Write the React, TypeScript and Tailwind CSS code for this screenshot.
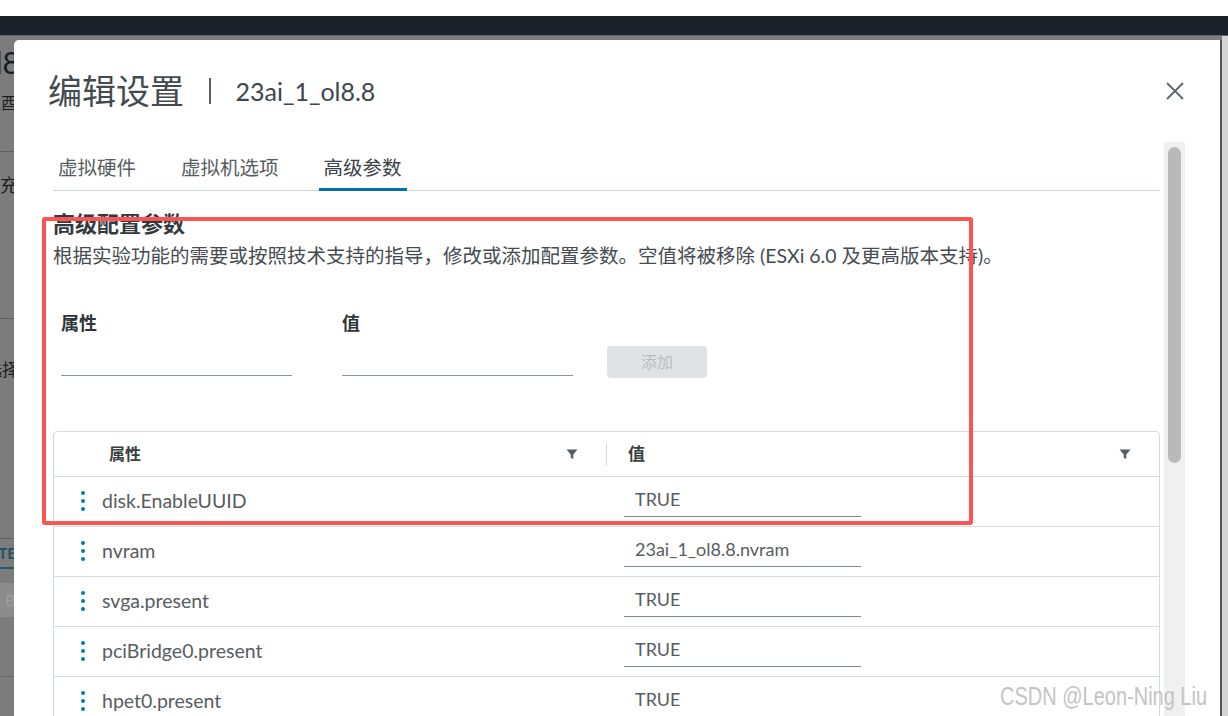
import React from "react";

const rows: [string, string][] = [
  ["disk.EnableUUID", "TRUE"],
  ["nvram", "23ai_1_ol8.8.nvram"],
  ["svga.present", "TRUE"],
  ["pciBridge0.present", "TRUE"],
  ["hpet0.present", "TRUE"],
];

function FilterIcon() {
  return (
    <svg width="12" height="12" viewBox="0 0 12 12" className="shrink-0">
      <path d="M0.5 1.5h11L7.3 6.4V11L4.7 9.8V6.4z" fill="#555d62" />
    </svg>
  );
}

function Kebab() {
  return (
    <div className="flex flex-col items-center gap-[4px] w-[6px]">
      <span className="w-[4px] h-[4px] rounded-full bg-[#0079b8]" />
      <span className="w-[4px] h-[4px] rounded-full bg-[#0079b8]" />
      <span className="w-[4px] h-[4px] rounded-full bg-[#0079b8]" />
    </div>
  );
}

function CloseIcon() {
  return (
    <svg width="20" height="20" viewBox="0 0 20 20">
      <path d="M2 2L18 18M18 2L2 18" stroke="#5c666d" strokeWidth="1.8" fill="none" />
    </svg>
  );
}

export default function App() {
  return (
    <div className="relative w-[1228px] h-[716px] overflow-hidden bg-[#7c7c7c] font-['Lato','Noto_Sans_CJK_SC',sans-serif]">
      {/* browser chrome + app top bar */}
      <div className="h-[16px] bg-white" />
      <div className="h-[20px] bg-[#1b2128] border-b border-[#5d6266]" />

      {/* dimmed page behind the dialog */}
      <div className="flex h-[680px]">
        <div className="w-[14px] overflow-hidden flex flex-col text-[#1d1d1d]">
          <div className="h-[52px] flex items-center justify-end">
            <span className="text-[30px] leading-none whitespace-nowrap mr-[-6px]">ol8</span>
          </div>
          <div className="h-[30px] flex items-center justify-end">
            <span className="text-[16px] leading-none whitespace-nowrap mr-[-3px]">配置酉</span>
          </div>
          <div className="h-[34px] border-b border-[#5e5e5e]" />
          <div className="h-[65px] flex items-center justify-end">
            <span className="text-[18px] leading-none whitespace-nowrap mr-[-4px]">补充</span>
          </div>
          <div className="h-[102px] border-b border-[#5e5e5e]" />
          <div className="h-[100px] flex items-center justify-end">
            <span className="text-[17px] leading-none whitespace-nowrap mr-[-5px]">选择</span>
          </div>
          <div className="h-[120px] border-b border-[#5e5e5e]" />
          <div className="h-[30px] flex items-center justify-end border-b-2 border-[#1e5a7a] text-[#1e5068] font-bold">
            <span className="text-[15px] leading-none whitespace-nowrap mr-[-2px]">ATE</span>
          </div>
          <div className="h-[14px]" />
          <div className="h-[34px] bg-[#8c8c8c] flex items-center justify-end text-[#9e9e9e]">
            <span className="text-[15px] leading-none whitespace-nowrap mr-[-1px]">B</span>
          </div>
          <div className="h-[60px] border-b border-[#6a6a6a]" />
        </div>
        <div className="flex-1" />
        <div className="w-[6px] bg-[#d4d4d4]" />
      </div>

      {/* dialog */}
      <div className="absolute left-[14px] top-[40px] w-[1208px] h-[690px] bg-white rounded-tl-[5px] border-r-2 border-[#555] flex flex-col">
        <div className="flex items-center h-[42px] mt-[30px] pl-[34px] pr-[35px]">
          <span className="text-[34px] leading-none text-[#444b4f] whitespace-nowrap">编辑设置</span>
          <span className="w-[1.5px] h-[26px] bg-[#566066] ml-[25px] mr-[25px]" />
          <span className="text-[25px] leading-none text-[#3d474d] whitespace-nowrap">23ai_1_ol8.8</span>
          <button className="ml-auto">
            <CloseIcon />
          </button>
        </div>

        <div className="flex flex-1 min-h-0 mt-[30px]">
          <div className="ml-[39px] w-[1107px] pt-[3px] flex flex-col">
            {/* tabs */}
            <div className="flex gap-[35px] h-[46px] border-b border-[#ccd5da]">
              <div className="px-[5px] flex items-center text-[19.5px] text-[#565c60]">虚拟硬件</div>
              <div className="px-[5px] flex items-center text-[19.5px] text-[#565c60]">虚拟机选项</div>
              <div className="px-[5px] flex items-center pt-[3px] text-[19.5px] text-[#3a4145] border-b-[3px] border-[#0072a3] -mb-px">
                高级参数
              </div>
            </div>

            <div className="mt-[20px] text-[22px] font-bold leading-[26px] text-[#333a3e]">高级配置参数</div>
            <div className="mt-[6px] text-[19.5px] leading-[26px] text-[#454b4f] whitespace-nowrap">
              根据实验功能的需要或按照技术支持的指导，修改或添加配置参数。空值将被移除 (ESXi 6.0 及更高版本支持)。
            </div>

            {/* add form */}
            <div className="flex items-end mt-[42px] pl-[8px]">
              <div className="w-[231px] flex flex-col">
                <span className="text-[18px] font-bold leading-[24px] text-[#2f3538]">属性</span>
                <div className="mt-[11px] h-[30px] border-b-[1.5px] border-[#8a969c]" />
              </div>
              <div className="ml-[50px] w-[231px] flex flex-col">
                <span className="text-[18px] font-bold leading-[24px] text-[#2f3538]">值</span>
                <div className="mt-[11px] h-[30px] border-b-[1.5px] border-[#8a969c]" />
              </div>
              <button className="ml-[34px] mb-[-2px] w-[100px] h-[32px] rounded-[4px] bg-[#e0e3e5] text-[16px] text-[#b7bdc1]">
                添加
              </button>
            </div>

            {/* parameters table */}
            <div className="mt-[55px] border border-[#d5dce0] rounded-[4px]">
              <div className="flex items-center h-[45px] border-b border-[#d5dce0]">
                <div className="w-[552px] flex items-center pl-[55px] pr-[28px]">
                  <span className="text-[16px] font-semibold text-[#3a3f42]">属性</span>
                  <span className="ml-auto">
                    <FilterIcon />
                  </span>
                </div>
                <div className="w-px h-[23px] bg-[#d5dce0]" />
                <div className="flex-1 flex items-center pl-[21px] pr-[28px]">
                  <span className="text-[17px] font-semibold text-[#3a3f42]">值</span>
                  <span className="ml-auto">
                    <FilterIcon />
                  </span>
                </div>
              </div>
              {rows.map(([name, value]) => (
                <div key={name} className="flex items-start h-[50px] border-b border-[#d5dce0]">
                  <div className="w-[570px] h-full flex items-center pl-[26px] pb-[2px]">
                    <Kebab />
                    <span className="ml-[16px] text-[19.5px] text-[#575d61]">{name}</span>
                  </div>
                  <div className="w-[237px] h-[35px] mt-[5px] border-b-[1.5px] border-[#7d898f] flex items-center pl-[11px]">
                    <span className="text-[18px] text-[#575d61] whitespace-nowrap">{value}</span>
                  </div>
                </div>
              ))}
            </div>
          </div>

          {/* scrollbar */}
          <div className="ml-[4px] w-[21px] bg-[#f0f0f0] flex justify-center">
            <div className="mt-[5px] w-[13px] h-[316px] rounded-full bg-[#b9b9b9]" />
          </div>
        </div>
      </div>

      {/* highlight frame */}
      <div className="absolute left-[42px] top-[217px] w-[931px] h-[308px] border-4 border-[#fb5456] rounded-[3px]" />

      {/* watermark */}
      <div className="absolute left-[1000px] top-[681px] text-[25px] leading-[30px] text-[#c4c4c4] whitespace-nowrap origin-left scale-x-[0.8] font-['Liberation_Sans',sans-serif]">
        CSDN @Leon-Ning Liu
      </div>
    </div>
  );
}
